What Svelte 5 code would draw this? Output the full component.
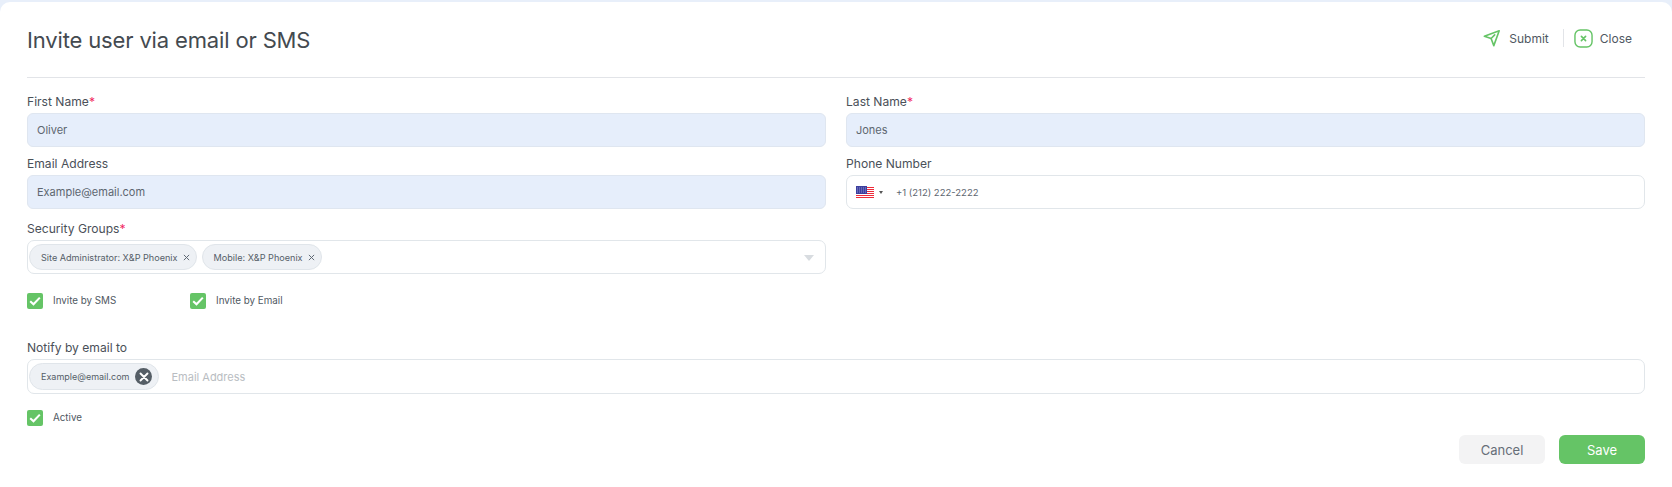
<script>
    let firstName = 'Oliver';
    let lastName = 'Jones';
    let email = 'Example@email.com';

    const groups = ['Site Administrator: X&P Phoenix', 'Mobile: X&P Phoenix'];
</script>

<div class="page">
    <div class="card">
        <header class="header">
            <h1>Invite user via email or SMS</h1>
            <div class="actions">
                <button class="action">
                    <svg width="18" height="18" viewBox="0 0 20 20" fill="none" stroke="#65c466" stroke-width="1.8" stroke-linejoin="round" stroke-linecap="round">
                        <path d="M1.5 8 L18 2 L12 18.5 L9 10.5 Z" />
                        <path d="M9 10.5 L13 6.5" />
                    </svg>
                    <span>Submit</span>
                </button>
                <span class="sep"></span>
                <button class="action close">
                    <svg width="19" height="19" viewBox="0 0 20 20" fill="none" stroke="#65c466" stroke-linecap="round">
                        <rect x="1" y="1" width="18" height="18" rx="5.5" stroke-width="1.5" />
                        <path d="M7.8 7.8 L12.2 12.2 M12.2 7.8 L7.8 12.2" stroke-width="1.7" />
                    </svg>
                    <span>Close</span>
                </button>
            </div>
        </header>

        <div class="form">
            <div class="grid">
                <div class="field">
                    <label for="first">First Name<em>*</em></label>
                    <input id="first" class="filled" bind:value={firstName} />
                </div>
                <div class="field">
                    <label for="last">Last Name<em>*</em></label>
                    <input id="last" class="filled" bind:value={lastName} />
                </div>
                <div class="field">
                    <label for="email">Email Address</label>
                    <input id="email" class="filled" bind:value={email} />
                </div>
                <div class="field">
                    <label for="phone">Phone Number</label>
                    <div class="box phone">
                        <svg class="flag" width="18" height="13" viewBox="0 0 18 13">
                            <rect width="18" height="13" fill="#fff" />
                            <path d="M0 1h18M0 3h18M0 5h18M0 7h18M0 9h18M0 11h18" stroke="#ee2b3a" stroke-width="1.2" transform="translate(0 .5)" />
                            <rect width="11" height="8" fill="#3c3f9e" />
                            <path d="M1 2h9M1 4h9M1 6h9" stroke="#8f92d0" stroke-width="1" stroke-dasharray="1 1" />
                        </svg>
                        <span class="caret"></span>
                        <span class="phone-text">+1 (212) 222-2222</span>
                    </div>
                </div>
                <div class="field security">
                    <span class="label">Security Groups<em>*</em></span>
                    <div class="box tags">
                        {#each groups as group}
                            <span class="tag">
                                {group}
                                <svg width="7" height="7" viewBox="0 0 8 8" stroke="#5b6570" stroke-width="1.1"><path d="M1 1 L7 7 M7 1 L1 7" /></svg>
                            </span>
                        {/each}
                        <span class="arrow"></span>
                    </div>
                </div>
            </div>

            <div class="checks">
                <label class="check sms"><span class="tick"><svg width="16" height="16" viewBox="0 0 16 16" fill="none" stroke="#fff" stroke-width="2.1"><path d="M3.2 8.2 L6.5 11.2 L12.8 4.6" /></svg></span>Invite by SMS</label>
                <label class="check"><span class="tick"><svg width="16" height="16" viewBox="0 0 16 16" fill="none" stroke="#fff" stroke-width="2.1"><path d="M3.2 8.2 L6.5 11.2 L12.8 4.6" /></svg></span>Invite by Email</label>
            </div>

            <div class="field notify">
                <span class="label">Notify by email to</span>
                <div class="box tags">
                    <span class="tag email-tag">
                        Example@email.com
                        <span class="remove">
                            <svg width="10" height="10" viewBox="0 0 10 10" stroke="#fff" stroke-width="1.9" stroke-linecap="round"><path d="M1.5 1.5 L8.5 8.5 M8.5 1.5 L1.5 8.5" /></svg>
                        </span>
                    </span>
                    <span class="placeholder">Email Address</span>
                </div>
            </div>

            <label class="check active"><span class="tick"><svg width="16" height="16" viewBox="0 0 16 16" fill="none" stroke="#fff" stroke-width="2.1"><path d="M3.2 8.2 L6.5 11.2 L12.8 4.6" /></svg></span>Active</label>

            <div class="footer">
                <button class="btn cancel">Cancel</button>
                <button class="btn save">Save</button>
            </div>
        </div>
    </div>
</div>

<style>
    :global(body) {
        margin: 0;
        background: #fff;
    }

    .page {
        height: 487px;
        background: #e8effa;
        padding-top: 2px;
        box-sizing: border-box;
        font-family: Inter, "Open Sans", sans-serif;
        color: #4a5058;
    }

    .card {
        height: 485px;
        background: #fff;
        border-radius: 10px 10px 0 0;
        padding: 0 27px;
        box-sizing: border-box;
    }

    .header {
        display: flex;
        justify-content: space-between;
        align-items: center;
        height: 75px;
        border-bottom: 1px solid #e2e4e8;
    }

    h1 {
        margin: 1px 0 0;
        font-size: 22px;
        font-weight: 400;
        letter-spacing: -0.15px;
        color: #444a50;
    }

    .actions {
        display: flex;
        align-items: center;
        margin: 0 13px 3px 0;
    }

    .action {
        display: flex;
        align-items: center;
        gap: 8px;
        padding: 0;
        border: none;
        background: none;
        font: inherit;
        font-size: 12px;
        color: #4f5862;
    }

    .sep {
        width: 1px;
        height: 18px;
        background: #e2e4e8;
        margin: 0 10px 0 14px;
    }

    .close {
        gap: 7px;
    }

    .form {
        padding-top: 15px;
    }

    .grid {
        display: grid;
        grid-template-columns: 799px 799px;
        column-gap: 20px;
        row-gap: 8px;
    }

    .field {
        display: flex;
        flex-direction: column;
    }

    label, .label {
        font-size: 12.1px;
        line-height: 17px;
        color: #4a5058;
        margin-bottom: 3px;
    }

    em {
        color: #f0245c;
        font-style: normal;
    }

    input {
        height: 34px;
        box-sizing: border-box;
        padding: 0 9px;
        border: 1px solid #dfe6f0;
        border-radius: 6px;
        font: inherit;
        font-size: 11px;
        color: #5d6670;
        outline: none;
    }

    .filled {
        background: #e6eefb;
    }

    .box {
        display: flex;
        align-items: center;
        height: 34px;
        box-sizing: border-box;
        border: 1px solid #e1e6ea;
        border-radius: 7px;
        background: #fff;
    }

    .phone {
        padding-left: 9px;
    }

    .flag {
        flex: none;
    }

    .caret {
        width: 0;
        height: 0;
        margin-left: 5px;
        border-left: 2.5px solid transparent;
        border-right: 2.5px solid transparent;
        border-top: 3px solid #555;
    }

    .phone-text {
        margin-left: 13px;
        font-size: 9.5px;
        color: #5d6670;
    }

    .security {
        grid-column: 1;
        margin-top: 3px;
    }

    .tags {
        position: relative;
        gap: 5px;
        padding-left: 1px;
    }

    .tag {
        display: inline-flex;
        align-items: center;
        gap: 5px;
        height: 26px;
        box-sizing: border-box;
        padding: 0 6px 0 11px;
        border: 1px solid #e0e5ea;
        border-radius: 14px;
        background: #eef1f5;
        font-size: 9.1px;
        color: #555e68;
        white-space: nowrap;
    }

    .arrow {
        position: absolute;
        right: 11px;
        top: 14px;
        width: 0;
        height: 0;
        border-left: 5px solid transparent;
        border-right: 5px solid transparent;
        border-top: 6px solid #d8dce0;
    }

    .checks {
        display: flex;
        margin-top: 19px;
    }

    .check {
        display: flex;
        align-items: center;
        gap: 10px;
        margin: 0;
        font-size: 9.8px;
        line-height: 16px;
        color: #4f5862;
    }

    .sms {
        width: 163px;
    }

    .tick {
        display: block;
        width: 16px;
        height: 16px;
        border-radius: 2px;
        background: #65c466;
    }

    .tick svg {
        display: block;
    }

    .notify {
        margin-top: 30px;
    }

    .notify .box {
        height: 35px;
    }

    .email-tag {
        height: 27px;
        gap: 6px;
        padding: 0 6px 0 11px;
        font-size: 9px;
    }

    .remove {
        display: flex;
        align-items: center;
        justify-content: center;
        width: 17px;
        height: 17px;
        border-radius: 50%;
        background: #555e66;
    }

    .placeholder {
        margin-left: 7px;
        font-size: 11px;
        color: #b9bdc2;
    }

    .active {
        margin-top: 16px;
    }

    .footer {
        display: flex;
        justify-content: flex-end;
        gap: 14px;
        margin-top: 9px;
    }

    .btn {
        width: 86px;
        height: 29px;
        border: none;
        border-radius: 6px;
        font: inherit;
        font-size: 13px;
    }

    .cancel {
        background: #f3f3f4;
        color: #666e78;
    }

    .save {
        background: #65c466;
        color: #fff;
    }
</style>
